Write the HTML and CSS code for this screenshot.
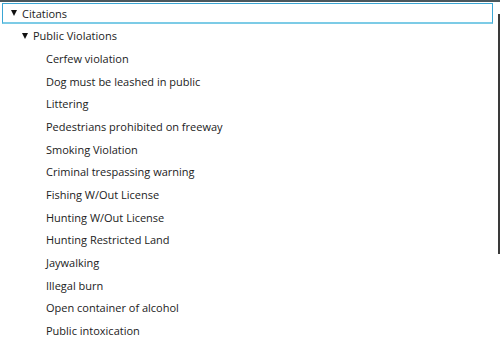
FILE: index.html
```html
<!DOCTYPE html>
<html>
<head>
<meta charset="utf-8">
<link rel="stylesheet" href="styles.css">
</head>
<body>
<div class="topbar"></div>
<div class="tree">
  <div class="row level0 selected"><span class="caret"></span><span class="label">Citations</span></div>
  <div class="row level1"><span class="caret"></span><span class="label">Public Violations</span></div>
  <div class="row level2"><span class="label">Cerfew violation</span></div>
  <div class="row level2"><span class="label">Dog must be leashed in public</span></div>
  <div class="row level2"><span class="label">Littering</span></div>
  <div class="row level2"><span class="label">Pedestrians prohibited on freeway</span></div>
  <div class="row level2"><span class="label">Smoking Violation</span></div>
  <div class="row level2"><span class="label">Criminal trespassing warning</span></div>
  <div class="row level2"><span class="label">Fishing W/Out License</span></div>
  <div class="row level2"><span class="label">Hunting W/Out License</span></div>
  <div class="row level2"><span class="label">Hunting Restricted Land</span></div>
  <div class="row level2"><span class="label">Jaywalking</span></div>
  <div class="row level2"><span class="label">Illegal burn</span></div>
  <div class="row level2"><span class="label">Open container of alcohol</span></div>
  <div class="row level2"><span class="label">Public intoxication</span></div>
</div>
<div class="scrollbar"></div>
</body>
</html>
```
FILE: styles.css
```css
html, body {
  margin: 0;
  padding: 0;
  background: #ffffff;
  overflow: hidden;
}
body {
  width: 500px;
  height: 343px;
  position: relative;
  font-family: "Open Sans", "Noto Sans", sans-serif;
  font-size: 11px;
  color: #222222;
}
.topbar {
  height: 2px;
  background: #4b575c;
}
.tree {
  display: flex;
  flex-direction: column;
}
.row {
  height: 22.67px;
  display: flex;
  align-items: center;
  box-sizing: border-box;
  white-space: nowrap;
}
.row.selected {
  margin: 1px 7px 0 2px;
  height: 21px;
  border: 1px solid #3aa6d4;
  border-bottom: 2px solid #7ccbe6;
  margin-bottom: 0.67px;
}
.level0 { padding-left: 8px; }
.level1 { padding-left: 22px; }
.level2 { padding-left: 46px; }
.caret {
  width: 0;
  height: 0;
  border-left: 3.5px solid transparent;
  border-right: 3.5px solid transparent;
  border-top: 6px solid #111111;
  margin-right: 5px;
}
.scrollbar {
  position: absolute;
  right: 0;
  top: 14px;
  width: 2px;
  height: 240px;
  background: #3a3a3a;
}
```
